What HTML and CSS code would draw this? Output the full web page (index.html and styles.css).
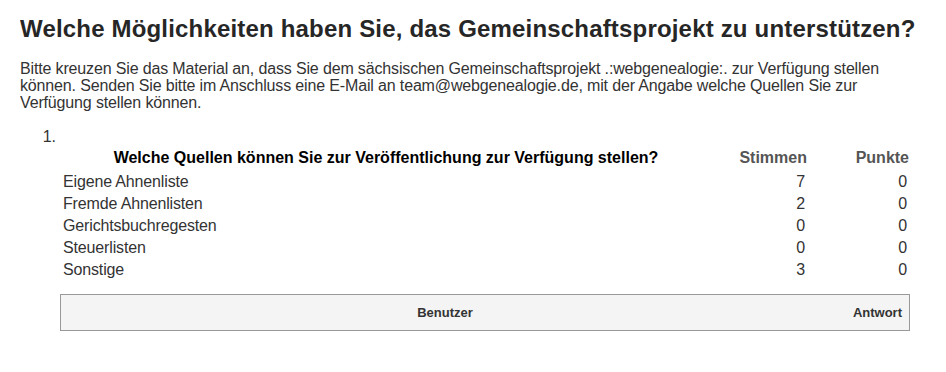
FILE: index.html
```html
<!doctype html>
<html>

<head>
    <title>Umfrage</title>
    <link rel="stylesheet" href="styles.css">
</head>

<body>
    <h1 class="title">Welche Möglichkeiten haben Sie, das Gemeinschaftsprojekt zu unterstützen?</h1>
    <p class="intro">Bitte kreuzen Sie das Material an, dass Sie dem sächsischen Gemeinschaftsprojekt .:webgenealogie:. zur Verfügung stellen können. Senden Sie bitte im Anschluss eine E-Mail an team@webgenealogie.de, mit der Angabe welche Quellen Sie zur Verfügung stellen können.</p>
    <ol class="poll">
        <li><br/>
            <table class="results">
                <tr>
                    <th class="question">Welche Quellen können Sie zur Veröffentlichung zur Verfügung stellen?</th>
                    <th class="num">Stimmen</th>
                    <th class="num">Punkte</th>
                </tr>
                <tr><td>Eigene Ahnenliste</td><td class="num">7</td><td class="num">0</td></tr>
                <tr><td>Fremde Ahnenlisten</td><td class="num">2</td><td class="num">0</td></tr>
                <tr><td>Gerichtsbuchregesten</td><td class="num">0</td><td class="num">0</td></tr>
                <tr><td>Steuerlisten</td><td class="num">0</td><td class="num">0</td></tr>
                <tr><td>Sonstige</td><td class="num">3</td><td class="num">0</td></tr>
            </table>
            <table class="users">
                <tr>
                    <th class="user">Benutzer</th>
                    <th class="answer">Antwort</th>
                </tr>
            </table>
        </li>
    </ol>
</body>

</html>
```

FILE: styles.css
```css
body {
    margin: 0 20px;
    background-color: #fff;
    color: #333;
    font-family: "Liberation Sans", Arial, sans-serif;
    font-size: 16px;
    letter-spacing: -0.15px;
}

.title {
    margin: 15px 0 17px;
    font-size: 24px;
    line-height: 28px;
    letter-spacing: 0.18px;
    color: #262626;
}

.intro {
    margin: 0;
    line-height: 17px;
}

.poll {
    margin: 17px 0 0;
    padding: 0 16px 0 40px;
    line-height: 17px;
}

.results {
    width: 100%;
    border-collapse: collapse;
}

.results th {
    height: 25px;
    padding: 0 1px;
    font-weight: bold;
    letter-spacing: 0;
    color: #555;
}

.results th.question {
    padding-left: 7px;
    color: #000;
    text-align: center;
}

.results td {
    height: 22px;
    padding: 0 3px;
}

.results .num {
    width: 96px;
    text-align: right;
}

.users {
    width: 100%;
    margin-top: 14px;
    border-collapse: collapse;
    border: 1px solid #999;
    background-color: #f4f4f4;
}

.users th {
    height: 35px;
    padding: 0 7px;
    font-size: 13px;
    font-weight: bold;
    letter-spacing: 0;
    color: #333;
}

.users .user {
    text-align: center;
}

.users .answer {
    width: 66px;
    text-align: right;
}
```
